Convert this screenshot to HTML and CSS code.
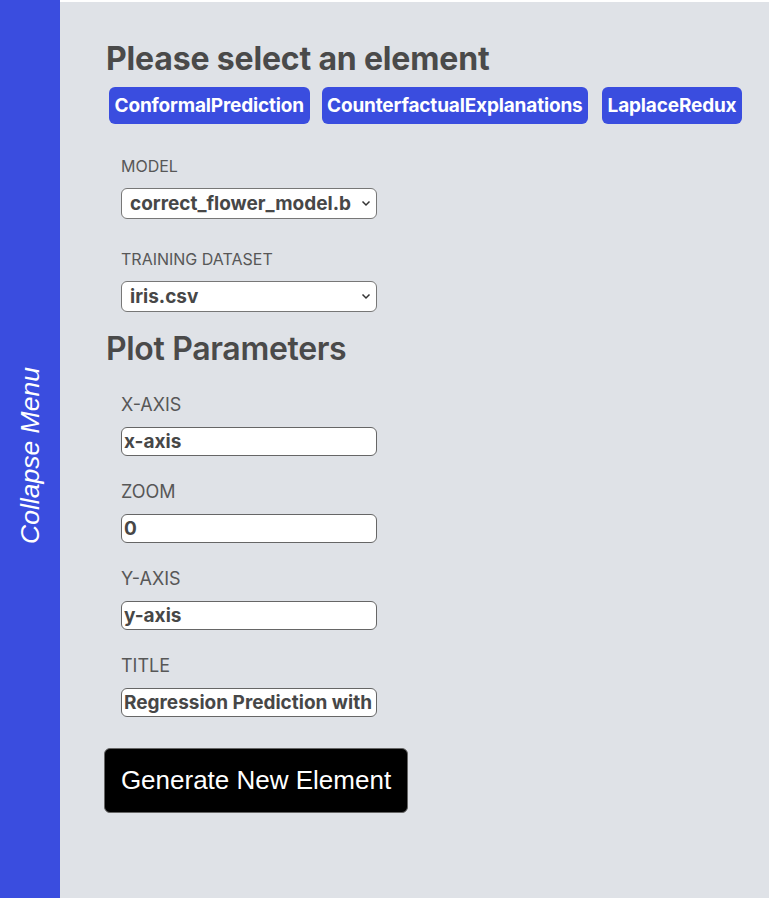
FILE: index.html
```html
<!DOCTYPE html>
<html>
<head>
<meta charset="utf-8">
<link rel="stylesheet" href="styles.css">
</head>
<body>
<div class="layout">
  <aside class="sidebar"><span class="collapse">Collapse Menu</span></aside>
  <main class="main">
    <h1 class="title">Please select an element</h1>
    <div class="chips">
      <button class="chip">ConformalPrediction</button>
      <button class="chip">CounterfactualExplanations</button>
      <button class="chip chip-last">LaplaceRedux</button>
    </div>
    <div class="fields">
      <div class="field">
        <label class="label">MODEL</label>
        <div class="select"><span class="select-text">correct_flower_model.bson</span><svg class="chev" width="10" height="7" viewBox="0 0 10 7"><path d="M1.5 1.5 L5 5 L8.5 1.5" fill="none" stroke="#333" stroke-width="1.5"/></svg></div>
      </div>
      <div class="field">
        <label class="label">TRAINING DATASET</label>
        <div class="select"><span class="select-text">iris.csv</span><svg class="chev" width="10" height="7" viewBox="0 0 10 7"><path d="M1.5 1.5 L5 5 L8.5 1.5" fill="none" stroke="#333" stroke-width="1.5"/></svg></div>
      </div>
    </div>
    <h2 class="subtitle">Plot Parameters</h2>
    <div class="fields fields-plot">
      <div class="field"><label class="label">X-AXIS</label><div class="input">x-axis</div></div>
      <div class="field"><label class="label">ZOOM</label><div class="input">0</div></div>
      <div class="field"><label class="label">Y-AXIS</label><div class="input">y-axis</div></div>
      <div class="field"><label class="label">TITLE</label><div class="input">Regression Prediction with</div></div>
    </div>
    <button class="generate">Generate New Element</button>
  </main>
</div>
</body>
</html>
```
FILE: styles.css
```css
html, body { margin: 0; padding: 0; background: #ffffff; }
body { font-family: Inter, "Noto Sans", sans-serif; color: #4a4a4a; }
.layout { display: flex; height: 898px; }
.sidebar {
  width: 60px; flex: none; background: #3a4ddf;
  display: flex; align-items: center; justify-content: center;
}
.collapse {
  transform: rotate(-90deg); white-space: nowrap;
  font-family: "Liberation Sans", Arial, sans-serif; font-style: italic;
  font-size: 26.5px; color: #ffffff; position: relative; top: 6px;
}
.main { flex: 1; background: #dfe2e7; margin-top: 2px; padding-left: 46px; }
.title { margin: 37px 0 0 0; font-size: 32px; font-weight: 700; line-height: 40px; color: #4a4a4a; letter-spacing: -0.17px; }
.chips { display: flex; gap: 12px; margin-top: 8px; margin-left: 3px; }
.chip {
  background: #3a4ddf; color: #fff; border: none; border-radius: 6px;
  font-family: Inter, sans-serif; font-weight: 700; font-size: 19px; letter-spacing: -0.16px;
  height: 37px; padding: 0 5.5px;
}
.chip-last { margin-left: 2px; }
.fields { padding-left: 15px; }
.field { display: flex; flex-direction: column; align-items: flex-start; }
.label { font-size: 16px; line-height: 20px; color: #575757; margin-top: 30px; margin-bottom: 12px; }
.fields .field:first-child .label { margin-top: 32px; }
.select {
  width: 241px; height: 29px; background: #fff; border: 1px solid #777; border-radius: 6px;
  display: flex; align-items: center; padding: 0 5px 0 8px;
}
.select-text { flex: 1; overflow: hidden; white-space: nowrap; font-weight: 700; font-size: 19px; color: #474747; }
.chev { flex: none; margin-left: 10px; }
.subtitle { margin: 17px 0 0 0; font-size: 32px; font-weight: 600; line-height: 40px; color: #4a4a4a; letter-spacing: -0.33px; }
.fields-plot .label, .fields-plot .field:first-child .label { margin-top: 25px; margin-bottom: 11px; font-size: 18px; line-height: 22px; }
.input {
  width: 252px; height: 27px; background: #fff; border: 1px solid #666; border-radius: 6px;
  padding: 0 0 0 2px; display: flex; align-items: center;
  font-weight: 700; font-size: 19px; color: #474747; white-space: nowrap; overflow: hidden;
}
.generate {
  display: block; margin-top: 31px; margin-left: -2px; width: 304px; height: 65px;
  background: #000; color: #fff; border: 1px solid #666; border-radius: 6px;
  font-family: "Liberation Sans", Arial, sans-serif; font-size: 26px;
}
```
